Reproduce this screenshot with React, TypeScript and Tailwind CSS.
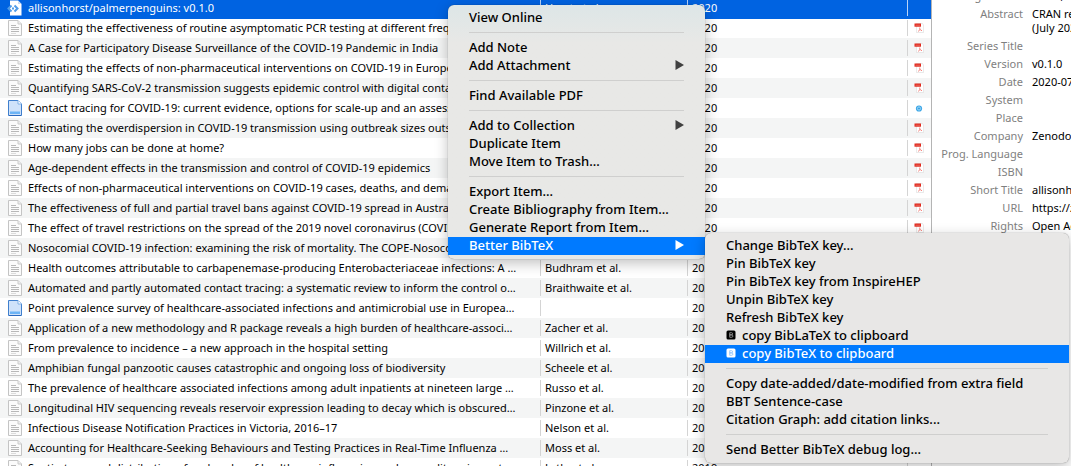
import type { ReactNode } from "react";
import clsx from "clsx";

type Kind = "software" | "article" | "report";

interface Item {
  title: string;
  creator: string;
  year: string;
  kind?: Kind;
  file?: "pdf" | "snapshot" | "none";
  selected?: boolean;
}

const items: Item[] = [
  { title: "allisonhorst/palmerpenguins: v0.1.0", creator: "Horst et al.", year: "2020", kind: "software", file: "none", selected: true },
  { title: "Estimating the effectiveness of routine asymptomatic PCR testing at different frequencies", creator: "Hellewell et al.", year: "2020" },
  { title: "A Case for Participatory Disease Surveillance of the COVID-19 Pandemic in India", creator: "Garg et al.", year: "2020" },
  { title: "Estimating the effects of non-pharmaceutical interventions on COVID-19 in Europe", creator: "Flaxman et al.", year: "2020" },
  { title: "Quantifying SARS-CoV-2 transmission suggests epidemic control with digital contact tracing", creator: "Ferretti et al.", year: "2020" },
  { title: "Contact tracing for COVID-19: current evidence, options for scale-up and an assessment", creator: "", year: "2020", kind: "report", file: "snapshot" },
  { title: "Estimating the overdispersion in COVID-19 transmission using outbreak sizes outside China", creator: "Endo et al.", year: "2020" },
  { title: "How many jobs can be done at home?", creator: "Dingel and Neiman", year: "2020" },
  { title: "Age-dependent effects in the transmission and control of COVID-19 epidemics", creator: "Davies et al.", year: "2020" },
  { title: "Effects of non-pharmaceutical interventions on COVID-19 cases, deaths, and demand", creator: "Davies et al.", year: "2020" },
  { title: "The effectiveness of full and partial travel bans against COVID-19 spread in Australia", creator: "Costantino et al.", year: "2020" },
  { title: "The effect of travel restrictions on the spread of the 2019 novel coronavirus (COVID-19)", creator: "Chinazzi et al.", year: "2020" },
  { title: "Nosocomial COVID-19 infection: examining the risk of mortality. The COPE-Nosocomial", creator: "Carter et al.", year: "2020" },
  { title: "Health outcomes attributable to carbapenemase-producing Enterobacteriaceae infections: A …", creator: "Budhram et al.", year: "2020" },
  { title: "Automated and partly automated contact tracing: a systematic review to inform the control o…", creator: "Braithwaite et al.", year: "2020" },
  { title: "Point prevalence survey of healthcare-associated infections and antimicrobial use in Europea…", creator: "", year: "2019", kind: "report", file: "none" },
  { title: "Application of a new methodology and R package reveals a high burden of healthcare-associ…", creator: "Zacher et al.", year: "2019" },
  { title: "From prevalence to incidence – a new approach in the hospital setting", creator: "Willrich et al.", year: "2019" },
  { title: "Amphibian fungal panzootic causes catastrophic and ongoing loss of biodiversity", creator: "Scheele et al.", year: "2019" },
  { title: "The prevalence of healthcare associated infections among adult inpatients at nineteen large …", creator: "Russo et al.", year: "2019" },
  { title: "Longitudinal HIV sequencing reveals reservoir expression leading to decay which is obscured…", creator: "Pinzone et al.", year: "2019" },
  { title: "Infectious Disease Notification Practices in Victoria, 2016–17", creator: "Nelson et al.", year: "2019" },
  { title: "Accounting for Healthcare-Seeking Behaviours and Testing Practices in Real-Time Influenza …", creator: "Moss et al.", year: "2019" },
  { title: "Spatio-temporal distribution of rank order of healthcare influencing and expenditure impact …", creator: "Lytle et al.", year: "2019", file: "none" },
];

const fields: [string, ReactNode][] = [
  ["Programmer", "Horst, Allison"],
  ["Abstract", <>CRAN release<br />(July 2020)</>],
  ["Series Title", ""],
  ["Version", "v0.1.0"],
  ["Date", "2020-07-25"],
  ["System", ""],
  ["Place", ""],
  ["Company", "Zenodo"],
  ["Prog. Language", ""],
  ["ISBN", ""],
  ["Short Title", "allisonhorst/palmerpenguins"],
  ["URL", "https://zenodo.org"],
  ["Rights", "Open Access"],
];

interface Entry {
  label: string;
  submenu?: boolean;
  active?: boolean;
  badge?: boolean;
}

const itemMenu: Entry[][] = [
  [{ label: "View Online" }],
  [{ label: "Add Note" }, { label: "Add Attachment", submenu: true }],
  [{ label: "Find Available PDF" }],
  [{ label: "Add to Collection", submenu: true }, { label: "Duplicate Item" }, { label: "Move Item to Trash…" }],
  [
    { label: "Export Item…" },
    { label: "Create Bibliography from Item…" },
    { label: "Generate Report from Item…" },
    { label: "Better BibTeX", submenu: true, active: true },
  ],
];

const bibtexMenu: Entry[][] = [
  [
    { label: "Change BibTeX key..." },
    { label: "Pin BibTeX key" },
    { label: "Pin BibTeX key from InspireHEP" },
    { label: "Unpin BibTeX key" },
    { label: "Refresh BibTeX key" },
    { label: "copy BibLaTeX to clipboard", badge: true },
    { label: "copy BibTeX to clipboard", badge: true, active: true },
  ],
  [
    { label: "Copy date-added/date-modified from extra field" },
    { label: "BBT Sentence-case" },
    { label: "Citation Graph: add citation links..." },
  ],
  [{ label: "Send Better BibTeX debug log..." }],
];

function ItemIcon({ kind }: { kind: Kind }) {
  if (kind === "software") {
    return (
      <svg width="16" height="16" viewBox="0 0 16 16" className="shrink-0" aria-hidden="true">
        <path d="M3 .5h8l3.500 3.500v11.500H3z" fill="#fff" />
        <path d="M11 .5V4h3.500z" fill="#c9dcf5" />
        <path d="M4.500 5.500L1.500 8.500l3 3M7.500 5.500l3 3l-3 3" fill="none" stroke="#4f9be8" strokeWidth="2" />
        <path d="M5 8.500h2" stroke="#4f9be8" strokeWidth="2" />
      </svg>
    );
  }
  if (kind === "report") {
    return (
      <svg width="16" height="16" viewBox="0 0 16 16" className="shrink-0" aria-hidden="true">
        <path d="M1.500.5H11l3.500 3.500v11.500h-13z" fill="#cfe2fa" stroke="#3f7fcd" />
        <path d="M11 .5V4h3.500" fill="#fff" stroke="#7fb0e8" />
        <path d="M3 11.500h10v2.500H3z" fill="#6db4f5" />
        <path d="M2 15.500h12" stroke="#2a68bd" />
      </svg>
    );
  }
  return (
    <svg width="16" height="16" viewBox="0 0 16 16" className="shrink-0" aria-hidden="true">
      <path d="M1.500.5H11l3.500 3.500v11.500h-13z" fill="#fbfbfb" stroke="#c4c4c4" />
      <path d="M11 .5V4h3.500" fill="#eee" stroke="#cacaca" />
      <path d="M4 5.500h5M4 7.500h8M4 9.500h8M4 11.500h8" stroke="#b8b8b8" />
      <path d="M4 13.500h5" stroke="#dcdcdc" />
    </svg>
  );
}

function PdfIcon() {
  return (
    <svg width="10" height="10" viewBox="0 0 10 10" role="img" aria-label="PDF">
      <path d="M2.500.5h6l1 1.500v7.500h-7z" fill="#fff" stroke="#dcdcdc" strokeWidth=".6" />
      <path d="M.5.500h6.500v3.200H.5z" fill="#e0281c" />
      <path d="M1.500 2.200h4.500" stroke="#f2938c" strokeWidth=".6" />
      <path d="M5.800 4.500v1.800L4.500 8.500M5.800 6.300L8 7.800" fill="none" stroke="#f0776f" strokeWidth=".9" />
    </svg>
  );
}

function SnapshotIcon() {
  return (
    <svg width="10" height="10" viewBox="0 0 10 10" role="img" aria-label="Snapshot">
      <circle cx="5" cy="5.500" r="3.100" fill="#3aa5e6" />
      <circle cx="5" cy="5.500" r="1.600" fill="none" stroke="#b8e2fa" strokeWidth=".8" />
    </svg>
  );
}

function FileIcon({ item }: { item: Item }) {
  if (item.file === "none") return null;
  return item.file === "snapshot" ? <SnapshotIcon /> : <PdfIcon />;
}

function Cell({ children, selected }: { children?: ReactNode; selected?: boolean }) {
  return (
    <div className={clsx("h-4 overflow-hidden border-l pl-1 leading-4 whitespace-nowrap", selected ? "border-[#b9d3f7]" : "border-[#d4d4d4]")}>
      {children}
    </div>
  );
}

function ItemTable() {
  return (
    <table className="-mt-0.5 w-full table-fixed border-collapse">
      <colgroup>
        <col />
        <col className="w-[147px]" />
        <col className="w-[220px]" />
        <col className="w-6" />
      </colgroup>
      <tbody>
        {items.map((item, i) => (
          <tr
            key={item.title}
            aria-selected={item.selected ?? false}
            className={clsx("h-5", item.selected ? "relative bg-[#0063e1] text-white shadow-[0_1px_0_#0063e1]" : i % 2 === 0 ? "bg-[#f4f5f5]" : "bg-white")}
          >
            <td className="p-0">
              <div className="flex h-4 items-center gap-[5px] overflow-hidden pl-[7px] leading-4 whitespace-nowrap">
                <ItemIcon kind={item.kind ?? "article"} />
                <span>{item.title}</span>
              </div>
            </td>
            <td className="p-0"><Cell selected={item.selected}>{item.creator}</Cell></td>
            <td className="p-0"><Cell selected={item.selected}>{item.year}</Cell></td>
            <td className="p-0">
              <Cell selected={item.selected}>
                <span className="flex h-4 items-center pl-0.5"><FileIcon item={item} /></span>
              </Cell>
            </td>
          </tr>
        ))}
      </tbody>
    </table>
  );
}

function Details() {
  return (
    <dl className="-mt-[11px] flex w-[139px] flex-col gap-1 overflow-hidden leading-[14px]">
      {fields.map(([label, value]) => (
        <div key={label} className="flex gap-[9px] whitespace-nowrap">
          <dt className="w-[91px] shrink-0 text-right text-[#7f7f7f]">{label}</dt>
          <dd>{value}</dd>
        </div>
      ))}
    </dl>
  );
}

function Menu({ label, groups, className }: { label: string; groups: Entry[][]; className: string }) {
  return (
    <div
      role="menu"
      aria-label={label}
      className={clsx("absolute rounded-md py-1 text-[13px] font-medium shadow-[0_0_1px_rgba(0,0,0,0.5),0_4px_14px_rgba(0,0,0,0.25)]", className)}
    >
      {groups.map((group, g) => (
        <div key={group[0].label} role="group">
          {g > 0 && <hr className="mx-[21px] mt-[5px] mb-1.5 border-t border-[#cfcfce]" />}
          {group.map((entry) => (
            <button
              key={entry.label}
              type="button"
              role="menuitem"
              aria-haspopup={entry.submenu ? "menu" : undefined}
              className={clsx("flex h-[18px] w-full items-center px-[21px] pb-0.5 text-left leading-4 whitespace-nowrap", entry.active ? "bg-[#007aff] text-white" : "text-black")}
            >
              {entry.badge && (
                <svg width="10" height="10" viewBox="0 0 10 10" className="mr-1.5" aria-hidden="true">
                  <rect x=".5" y=".5" width="9" height="9" rx="1.500" fill={entry.active ? "#fff" : "#000"} />
                  <path d="M3.700 2.700h1.800a1.100 1.100 0 0 1 0 2.200H3.700zM3.700 4.900h2a1.200 1.200 0 0 1 0 2.400h-2z" fill="none" stroke={entry.active ? "#7ab8fb" : "#b5b5b5"} strokeWidth=".7" />
                </svg>
              )}
              <span className="flex-1">{entry.label}</span>
              {entry.submenu && (
                <svg width="9" height="10" viewBox="0 0 9 10" aria-hidden="true">
                  <path d="M.5 0L9 5L.5 10z" fill={entry.active ? "#fff" : "#404040"} />
                </svg>
              )}
            </button>
          ))}
        </div>
      ))}
    </div>
  );
}

export default function App() {
  return (
    <div className="relative flex h-screen overflow-hidden bg-white font-['Noto_Sans',sans-serif] text-[11px] text-black">
      <main className="min-w-0 flex-1">
        <ItemTable />
      </main>
      <aside className="border-l border-[#b4b4b4]">
        <Details />
      </aside>
      <Menu label="Item" groups={itemMenu} className="top-[5px] left-[448px] w-[257px] bg-[#e8e8e6] bg-linear-to-b from-[#dde6e7] to-[#e8e8e6] to-15%" />
      <Menu label="Better BibTeX" groups={bibtexMenu} className="top-[233px] left-[705px] w-[364px] bg-[#e8e7e6]" />
    </div>
  );
}
